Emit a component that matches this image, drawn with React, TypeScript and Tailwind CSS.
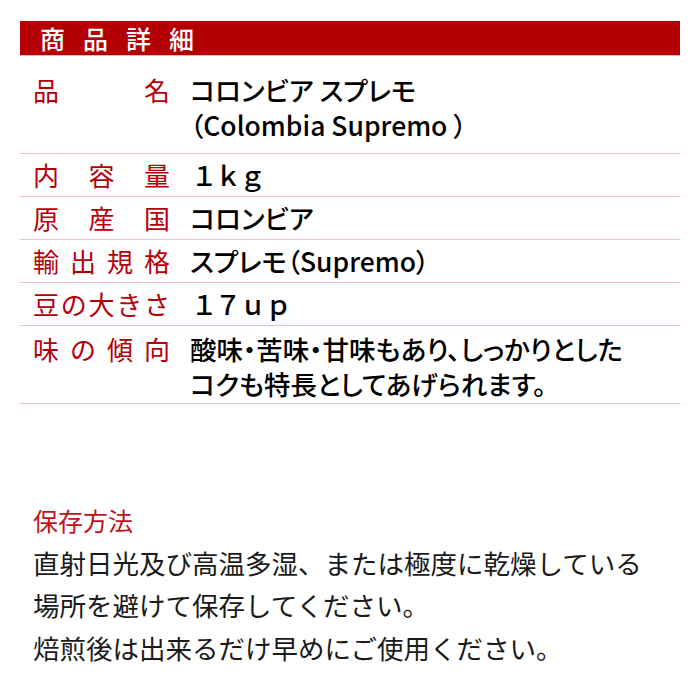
const jp = "font-['Noto_Sans_CJK_JP',sans-serif]"

const rows: { label: string[]; value: React.ReactNode; cls: string }[] = [
  {
    label: ["品", "名"],
    value: (
      <>
        <div>コロンビア スプレモ</div>
        <div>（Colombia Supremo ）</div>
      </>
    ),
    cls: "pt-[16px] pb-[11px]",
  },
  { label: ["内", "容", "量"], value: <span className="tracking-[4px] pl-[4px]">１ｋｇ</span>, cls: "" },
  { label: ["原", "産", "国"], value: "コロンビア", cls: "" },
  { label: ["輸", "出", "規", "格"], value: "スプレモ（Supremo）", cls: "" },
  { label: ["豆", "の", "大", "き", "さ"], value: <span className="tracking-[4px] pl-[4px]">１７ｕｐ</span>, cls: "" },
  {
    label: ["味", "の", "傾", "向"],
    value: (
      <>
        <div>酸味・苦味・甘味もあり、しっかりとした</div>
        <div>コクも特長としてあげられます。</div>
      </>
    ),
    cls: "pt-[5px] pb-[2px]",
  },
]

export default function App() {
  return (
    <div className={`w-[700px] h-[700px] bg-white pt-[21px] px-[20px] ${jp}`}>
      <div className="h-[35px] bg-[#b40004] border-b border-[#f0b4b4] flex items-center pl-[20px]">
        <span className="text-white text-[25px] leading-none tracking-[18px] font-medium">商品詳細</span>
      </div>

      {rows.map((r, i) => (
        <div
          key={i}
          className={`flex border-b border-[#f2c2c2] ${r.cls || "h-[43px] items-center"}`}
        >
          <div className={`w-[137px] ml-[13px] flex justify-between text-[26px] text-[#b5000a] ${r.cls ? "leading-[35px] h-[35px]" : "leading-[42px]"}`}>
            {r.label.map((c, j) => (
              <span key={j}>{c}</span>
            ))}
          </div>
          <div className={`ml-[20px] text-[26.5px] text-black font-medium [font-feature-settings:'palt'] ${r.cls ? "leading-[35px]" : "leading-[42px]"}`}>
            {r.value}
          </div>
        </div>
      ))}

      <div className="mt-[95px] pl-[13px] text-[26.5px] leading-[42.5px] text-[#1a1a1a]">
        <div className="text-[#c0141a] text-[25px]">保存方法</div>
        <div>直射日光及び高温多湿、または極度に乾燥している</div>
        <div>場所を避けて保存してください。</div>
        <div>焙煎後は出来るだけ早めにご使用ください。</div>
      </div>
    </div>
  )
}
